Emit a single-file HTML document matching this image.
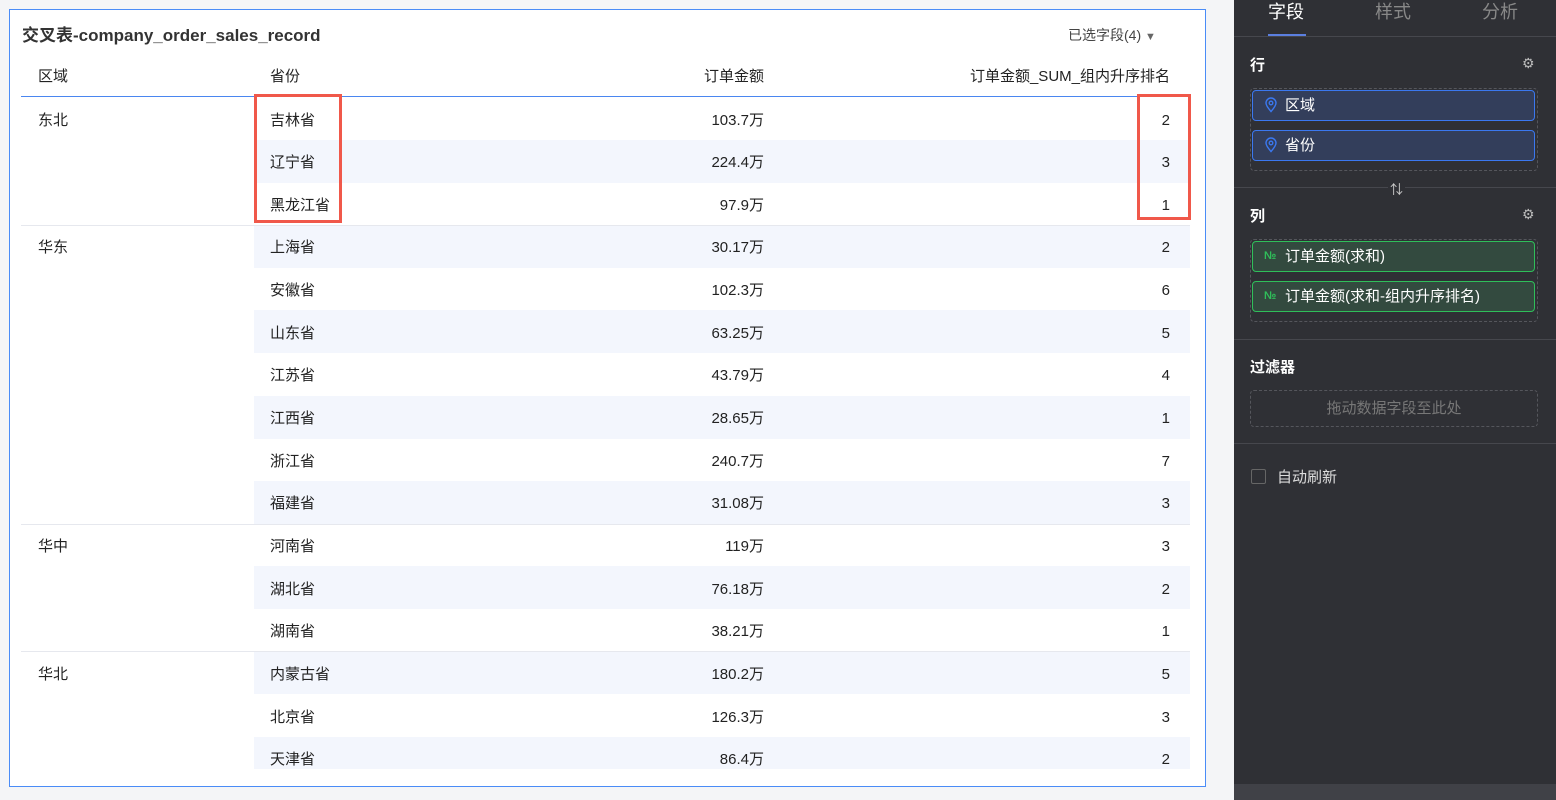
<!DOCTYPE html>
<html><head><meta charset="utf-8"><style>
*{box-sizing:border-box;margin:0;padding:0}
body{width:1556px;height:800px;background:#f4f5f7;font-family:"Liberation Sans","Noto Sans CJK SC",sans-serif;position:relative;overflow:hidden;color:#1f1f1f}
.card{position:absolute;left:9px;top:9px;width:1197px;height:778px;background:#fff;border:1px solid #4a8cf7}
.title{position:absolute;left:12px;top:15px;font-size:17px;font-weight:bold;color:#333;line-height:22px}
.sel{position:absolute;left:1058px;top:15px;font-size:14px;color:#444;line-height:20px}
.t{position:absolute;font-size:15px;color:#222;white-space:nowrap;line-height:20px;height:20px}
.r{text-align:right}
.stripe{position:absolute;left:244px;width:936px;height:43px;background:#f3f6fd}
.hl{position:absolute;left:11px;width:1169px;height:1px;background:#e6e8ee}
.red{position:absolute;border:3px solid #f0584a}
.side{position:absolute;left:1234px;top:0;width:322px;height:800px;background:#2f3035;color:#e8e8e8}
.side .st{position:absolute;font-size:15px;color:#fff;font-weight:bold;line-height:20px}
.div{position:absolute;left:0;width:322px;height:1px;background:#46474d}
.chip{position:absolute;left:18px;width:283px;height:31px;border-radius:4px;font-size:15px;color:#fff;padding-left:32px;line-height:29px}
.blue{background:#333e5b;border:1px solid #3b78f0}
.green{background:#334a3f;border:1px solid #2fbf5a}
.dash{position:absolute;left:16px;width:288px;border:1px dashed #55565c;border-radius:4px}
</style></head><body>
<div class="card">
<div class="title">交叉表-company_order_sales_record</div>
<div class="sel">已选字段(4) <span style="font-size:11px;color:#666">▼</span></div>
<div class="t" style="left:28px;top:57px">区域</div>
<div class="t" style="left:260px;top:57px">省份</div>
<div class="t r" style="left:600px;width:154px;top:57px">订单金额</div>
<div class="t r" style="left:860px;width:300px;top:57px">订单金额_SUM_组内升序排名</div>
<div style="position:absolute;left:11px;top:86px;width:1169px;height:1px;background:#4a86f0"></div>
<div id="rows"></div>
</div>
<div class="side">
<div style="position:absolute;left:34px;top:1px;font-size:18px;color:#fff;line-height:22px">字段</div>
<div style="position:absolute;left:141px;top:1px;font-size:18px;color:#888;line-height:22px">样式</div>
<div style="position:absolute;left:248px;top:1px;font-size:18px;color:#888;line-height:22px">分析</div>
<div style="position:absolute;left:34px;top:34px;width:38px;height:2px;background:#5b7fe0"></div>
<div class="div" style="top:36px"></div>
<div class="st" style="left:16px;top:56px">行</div>
<div style="position:absolute;left:288px;top:55px;font-size:14px;color:#bbb">⚙</div>
<div class="dash" style="top:88px;height:83px"></div>
<div class="chip blue" style="top:90px">区域</div>
<div class="chip blue" style="top:130px">省份</div>
<div class="div" style="top:187px"></div>
<div style="position:absolute;left:154px;top:179px;font-size:13px;color:#ccc;background:#2f3035;padding:0 2px">⇅</div>
<div class="st" style="left:16px;top:207px">列</div>
<div style="position:absolute;left:288px;top:206px;font-size:14px;color:#bbb">⚙</div>
<div class="dash" style="top:239px;height:83px"></div>
<div class="chip green" style="top:241px">订单金额(求和)</div>
<div class="chip green" style="top:281px">订单金额(求和-组内升序排名)</div>
<div class="div" style="top:339px"></div>
<div class="st" style="left:16px;top:358px">过滤器</div>
<div class="dash" style="top:390px;height:37px;text-align:center;line-height:35px;font-size:15px;color:#777">拖动数据字段至此处</div>
<div class="div" style="top:443px"></div>
<div style="position:absolute;left:17px;top:469px;width:15px;height:15px;border:1px solid #666;border-radius:2px"></div>
<div style="position:absolute;left:43px;top:468px;font-size:15px;color:#ddd;line-height:20px">自动刷新</div>
<div style="position:absolute;left:0;top:784px;width:322px;height:16px;background:#404147"></div>
</div>
<svg style="position:absolute;left:1264px;top:97px" width="14" height="16" viewBox="0 0 14 16"><path d="M7 14.5C3.5 10.5 2 8 2 6a5 5 0 0 1 10 0c0 2-1.5 4.5-5 8.5z" fill="none" stroke="#3b78f0" stroke-width="1.4"/><circle cx="7" cy="6" r="1.8" fill="none" stroke="#3b78f0" stroke-width="1.3"/></svg>
<svg style="position:absolute;left:1264px;top:137px" width="14" height="16" viewBox="0 0 14 16"><path d="M7 14.5C3.5 10.5 2 8 2 6a5 5 0 0 1 10 0c0 2-1.5 4.5-5 8.5z" fill="none" stroke="#3b78f0" stroke-width="1.4"/><circle cx="7" cy="6" r="1.8" fill="none" stroke="#3b78f0" stroke-width="1.3"/></svg>
<div style="position:absolute;left:1264px;top:250px;font-size:11px;color:#2fbf5a;font-weight:bold">№</div>
<div style="position:absolute;left:1264px;top:290px;font-size:11px;color:#2fbf5a;font-weight:bold">№</div>
<div class="red" style="left:254px;top:94px;width:88px;height:129px"></div>
<div class="red" style="left:1137px;top:94px;width:54px;height:126px"></div>
<script>
var d=[["东北","吉林省","103.7万",2],["","辽宁省","224.4万",3],["","黑龙江省","97.9万",1],["华东","上海省","30.17万",2],["","安徽省","102.3万",6],["","山东省","63.25万",5],["","江苏省","43.79万",4],["","江西省","28.65万",1],["","浙江省","240.7万",7],["","福建省","31.08万",3],["华中","河南省","119万",3],["","湖北省","76.18万",2],["","湖南省","38.21万",1],["华北","内蒙古省","180.2万",5],["","北京省","126.3万",3],["","天津省","86.4万",2]];
var h="";
d.forEach(function(r,i){var top=87+i*42.65;
if(i%2==1)h+='<div class="stripe" style="top:'+top+'px"></div>';
if(r[0]&&i>0)h+='<div class="hl" style="top:'+top+'px"></div>';
var ty=top+13.5;
h+='<div class="t" style="left:28px;top:'+ty+'px">'+r[0]+'</div><div class="t" style="left:260px;top:'+ty+'px">'+r[1]+'</div><div class="t r" style="left:600px;width:154px;top:'+ty+'px">'+r[2]+'</div><div class="t r" style="left:1000px;width:160px;top:'+ty+'px">'+r[3]+'</div>';});
h+='<div style="position:absolute;left:0;top:759px;width:1195px;height:17px;background:#fff"></div>';
document.getElementById("rows").innerHTML=h;
</script>
</body></html>
